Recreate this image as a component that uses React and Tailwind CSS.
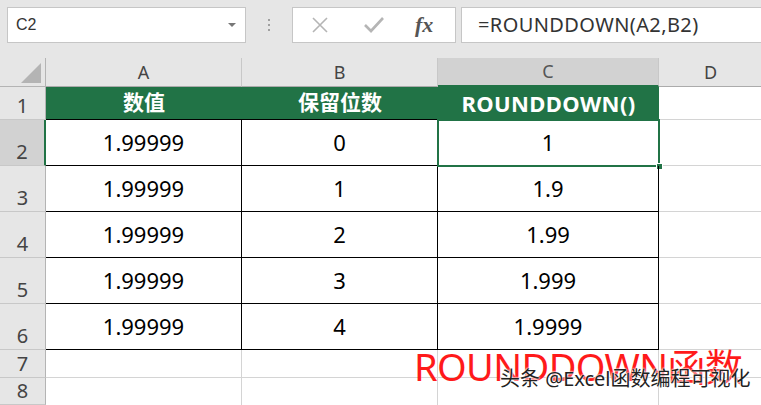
import React from "react";

const font = { fontFamily: '"Noto Sans", "Noto Sans CJK SC", sans-serif' };

const rows = [
  ["1.99999", "0", "1"],
  ["1.99999", "1", "1.9"],
  ["1.99999", "2", "1.99"],
  ["1.99999", "3", "1.999"],
  ["1.99999", "4", "1.9999"],
];

function RowHead({ n, h, active }) {
  return (
    <div
      className={
        "flex items-end justify-center border-b border-[#c8c8c8] text-[20px] leading-none pb-[3px] " +
        (active
          ? "bg-[#d2d2d2] text-[#444] border-r-2 border-r-[#217346]"
          : "bg-[#e6e6e6] text-[#444] border-r border-r-[#b4b4b4]")
      }
      style={{ height: h }}
    >
      {n}
    </div>
  );
}

export default function App() {
  return (
    <div className="relative w-[761px] h-[405px] overflow-hidden bg-white" style={font}>
      {/* formula bar */}
      <div className="h-[58px] bg-[#e6e6e6] flex items-start pt-[7px] pl-[7px]">
        <div className="w-[239px] h-[36px] border border-[#c6c6c6] bg-white flex items-center justify-between pl-[8px] pr-[9px]">
          <span className="text-[16px] text-[#333]" style={{ fontFamily: '"Liberation Sans", sans-serif' }}>C2</span>
          <span className="w-0 h-0 border-l-[4px] border-r-[4px] border-t-[4px] border-l-transparent border-r-transparent border-t-[#777]" />
        </div>
        <div className="w-[46px] h-[36px] flex flex-col items-center justify-center gap-[3px]">
          <span className="w-[2px] h-[2px] bg-[#a0a0a0]" />
          <span className="w-[2px] h-[2px] bg-[#a0a0a0]" />
          <span className="w-[2px] h-[2px] bg-[#a0a0a0]" />
        </div>
        <div className="w-[164px] h-[36px] border border-[#c6c6c6] bg-white flex items-center">
          <svg width="20" height="20" viewBox="0 0 20 20" className="ml-[17px]">
            <path d="M3 3 L17 17 M17 3 L3 17" stroke="#b5b5b5" strokeWidth="1.6" fill="none" />
          </svg>
          <svg width="22" height="20" viewBox="0 0 22 20" className="ml-[33px]">
            <path d="M2 10 L8 16 L20 3" stroke="#b5b5b5" strokeWidth="2.6" fill="none" />
          </svg>
          <span
            className="ml-[30px] text-[22px] italic font-bold text-[#555] leading-none"
            style={{ fontFamily: '"Liberation Serif", serif' }}
          >
            fx
          </span>
        </div>
        <div className="ml-[5px] flex-1 h-[36px] border border-[#c6c6c6] border-r-0 bg-white flex items-center pl-[16px]">
          <span className="text-[20px] text-[#333] tracking-[0.4px]">=ROUNDDOWN(A2,B2)</span>
        </div>
      </div>

      {/* grid */}
      <div className="grid grid-cols-[46px_196px_196px_221px_1fr]">
        {/* column headers */}
        <div className="h-[29px] bg-[#e6e6e6] border-r border-b border-[#b4b4b4] flex items-end justify-end pr-[4px] pb-[3px]">
          <span className="w-0 h-0 border-l-[20px] border-b-[20px] border-l-transparent border-b-[#b4b4b4]" />
        </div>
        <div className="h-[29px] bg-[#e6e6e6] border-r border-b border-r-[#c8c8c8] border-b-[#ababab] flex items-center justify-center text-[18px] text-[#444]">A</div>
        <div className="h-[29px] bg-[#e6e6e6] border-r border-b border-r-[#c8c8c8] border-b-[#ababab] flex items-center justify-center text-[18px] text-[#444]">B</div>
        <div className="h-[29px] bg-[#d2d2d2] border-r border-b-2 border-r-[#c8c8c8] border-b-[#217346] flex items-center justify-center text-[18px] text-[#555]">C</div>
        <div className="h-[29px] bg-[#e6e6e6] border-b border-b-[#ababab] flex items-center justify-start pl-[45px] text-[18px] text-[#444]">D</div>

        {/* row 1 */}
        <RowHead n="1" h={33} />
        <div className="h-[33px] bg-[#217346] border-b border-black flex items-center justify-center text-white font-bold text-[21px]">数值</div>
        <div className="h-[33px] bg-[#217346] border-b border-black flex items-center justify-center text-white font-bold text-[21px]">保留位数</div>
        <div className="h-[33px] bg-[#217346] border-b border-black flex items-center justify-center text-white font-bold text-[22px] tracking-[0.4px]">ROUNDDOWN()</div>
        <div className="h-[33px] border-b border-[#d4d4d4]" />

        {rows.map((r, i) => (
          <React.Fragment key={i}>
            <RowHead n={String(i + 2)} h={46} active={i === 0} />
            <div className="h-[46px] border-r border-b border-black flex items-center justify-center text-[22px] text-black">{r[0]}</div>
            <div className="h-[46px] border-r border-b border-black flex items-center justify-center text-[22px] text-black">{r[1]}</div>
            <div className="relative h-[46px] border-r border-b border-black flex items-center justify-center text-[22px] text-black">
              {r[2]}
              {i === 0 && (
                <>
                  <div className="absolute -left-[1px] -top-[1px] -right-[2px] -bottom-[2px] border-2 border-[#217346]" />
                  <div className="absolute -right-[5px] -bottom-[5px] w-[7px] h-[7px] bg-[#217346] border border-white" />
                </>
              )}
            </div>
            <div className="h-[46px] border-b border-[#d4d4d4]" />
          </React.Fragment>
        ))}

        {/* rows 7, 8 */}
        <RowHead n="7" h={28} />
        <div className="h-[28px] border-r border-b border-[#d4d4d4]" />
        <div className="h-[28px] border-r border-b border-[#d4d4d4]" />
        <div className="h-[28px] border-r border-b border-[#d4d4d4]" />
        <div className="h-[28px] border-b border-[#d4d4d4]" />
        <RowHead n="8" h={27} />
        <div className="h-[27px] border-r border-[#d4d4d4]" />
        <div className="h-[27px] border-r border-[#d4d4d4]" />
        <div className="h-[27px] border-r border-[#d4d4d4]" />
        <div className="h-[27px]" />
      </div>

      {/* overlays */}
      <div className="absolute left-[414px] top-[347px] text-[38px] leading-none text-[#ff1a1a] whitespace-nowrap tracking-[-0.6px]">
        ROUNDDOWN函数
      </div>
      <div
        className="absolute left-[500px] top-[369px] text-[20px] leading-none text-[#222] whitespace-nowrap"
        style={{ textShadow: "0 0 2px #fff, 0 0 2px #fff, 0 0 2px #fff" }}
      >
        头条 @Excel函数编程可视化
      </div>
    </div>
  );
}
